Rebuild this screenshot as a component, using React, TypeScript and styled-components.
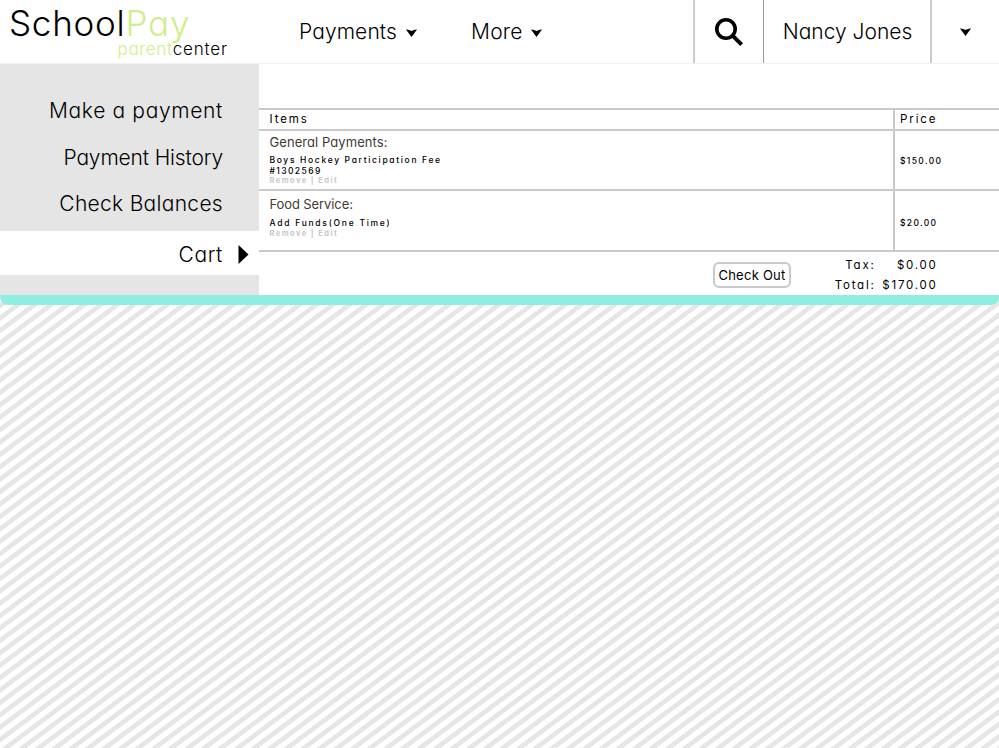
import React from "react";
import styled, { createGlobalStyle } from "styled-components";

const LINE = "#c9c9c9";
const GREY = "#e5e5e5";
const LIME = "#d0ee8c";

const GlobalStyle = createGlobalStyle`
  * { box-sizing: border-box; }
  body {
    margin: 0;
    background: #fff;
    color: #000;
    font-family: Inter, "Open Sans", sans-serif;
    font-weight: 300;
    font-feature-settings: "cv11" 1;
  }
`;

const Page = styled.div`
  display: flex;
  flex-direction: column;
  height: 748px;
  overflow: hidden;
  background: repeating-linear-gradient(
    143.2deg,
    #fff 0 3.9px,
    #e6e6e6 4.4px 8.6px,
    #fff 9.1px 9.93px
  );
`;

const Header = styled.header`
  display: flex;
  flex: none;
  height: 64px;
  background: #fff;
  border-bottom: 1px solid #f2f2f2;
`;

const Logo = styled.div`
  width: 289px;
  padding: 5px 0 0 9px;
`;

const Brand = styled.div`
  display: flex;
  font-size: 35px;
  line-height: 36px;
`;

const BrandPart = styled.span<{ $color?: string; $spacing: number }>`
  color: ${(p) => p.$color ?? "#000"};
  letter-spacing: ${(p) => p.$spacing}px;
`;

const SubBrand = styled(Brand)`
  justify-content: flex-end;
  width: 219px;
  margin-top: -1px;
  font-size: 17px;
  line-height: 18px;
`;

const MenuButton = styled.button<{ $width: number; $gap: number; $spacing: number }>`
  display: flex;
  align-items: center;
  gap: ${(p) => p.$gap}px;
  width: ${(p) => p.$width}px;
  padding: 0 0 0 10px;
  border: 0;
  background: none;
  color: inherit;
  font: inherit;
  font-size: 21px;
  letter-spacing: ${(p) => p.$spacing}px;

  svg {
    margin-top: 2px;
  }
`;

const HeaderCell = styled.div<{ $width?: number; $line: string }>`
  display: flex;
  align-items: center;
  justify-content: center;
  width: ${(p) => (p.$width ? `${p.$width}px` : "auto")};
  flex: ${(p) => (p.$width ? "none" : "1")};
  border-left: ${(p) => p.$line};
`;

const UserName = styled.span`
  padding-left: 1px;
  font-size: 21px;
  white-space: nowrap;
`;

const HeaderTools = styled.div`
  display: flex;
  width: 306px;
  margin-left: auto;
`;

const Body = styled.div`
  display: flex;
  flex: none;
  height: 231px;
  background: #fff;
`;

const Sidebar = styled.nav`
  display: flex;
  flex-direction: column;
  width: 259px;
  padding-top: 23.5px;
  background: ${GREY};
`;

const SideLink = styled.a<{ $active?: boolean; $spacing: number }>`
  display: flex;
  align-items: center;
  justify-content: flex-end;
  gap: 15px;
  height: ${(p) => (p.$active ? 44 : 46.5)}px;
  margin-top: ${(p) => (p.$active ? 4 : 0)}px;
  padding: ${(p) => (p.$active ? "2px 10px 0 0" : "0 36px 0 0")};
  background: ${(p) => (p.$active ? "#fff" : "transparent")};
  font-size: 21px;
  letter-spacing: ${(p) => p.$spacing}px;
`;

const CartPanel = styled.main`
  flex: 1;
  padding-top: 44px;
`;

const TableRow = styled.div<{ $height: number }>`
  display: grid;
  grid-template-columns: 634px 1fr;
  height: ${(p) => p.$height}px;
  border-top: 2px solid ${LINE};
`;

const HeadCell = styled.div`
  padding-left: 10.5px;
  font-size: 11.5px;
  font-weight: 400;
  line-height: 19px;
  letter-spacing: 1.9px;

  & + & {
    padding-left: 5px;
    border-left: 2px solid ${LINE};
  }
`;

const ItemCell = styled.div<{ $top: number }>`
  padding: ${(p) => p.$top}px 0 0 10.5px;
`;

const Category = styled.div<{ $spacing: number }>`
  color: #3f3b33;
  font-size: 13px;
  font-weight: 400;
  line-height: 16px;
  letter-spacing: ${(p) => p.$spacing}px;
`;

const Description = styled.div<{ $top: number; $spacing: number }>`
  margin-top: ${(p) => p.$top}px;
  font-size: 8.5px;
  font-weight: 500;
  line-height: 11px;
  letter-spacing: ${(p) => p.$spacing}px;
`;

const ItemNumber = styled.div`
  letter-spacing: 1.4px;
`;

const Actions = styled.div<{ $top?: number }>`
  margin-top: ${(p) => p.$top ?? 0}px;
  color: #c8c8c8;
  font-size: 7.5px;
  font-weight: 700;
  line-height: 8px;
  letter-spacing: 1.45px;
`;

const PriceCell = styled.div<{ $top: number }>`
  display: flex;
  align-items: center;
  padding: ${(p) => p.$top}px 0 0 5px;
  border-left: 2px solid ${LINE};
  font-size: 8.5px;
  font-weight: 500;
  letter-spacing: 1.35px;
`;

const Footer = styled.div`
  display: flex;
  height: 45px;
  padding-left: 454px;
  border-top: 2px solid ${LINE};
`;

const CheckOut = styled.button`
  width: 78px;
  height: 26px;
  margin: 10px 0 0;
  padding: 0;
  border: 2px solid ${LINE};
  border-radius: 6px;
  background: #fff;
  color: #000;
  font: inherit;
  font-size: 13px;
  font-weight: 400;
  line-height: 20px;
  letter-spacing: 0.25px;
  white-space: nowrap;
`;

const Totals = styled.dl`
  display: grid;
  grid-template-columns: 84.5px 62px;
  grid-auto-rows: 20px;
  margin: 3px 0 0;
  text-align: right;
  font-size: 11.5px;
  font-weight: 400;
  line-height: 20px;
  letter-spacing: 1.75px;
`;

const Term = styled.dt``;
const Amount = styled.dd`
  margin: 0;
`;

const Accent = styled.div`
  flex: none;
  height: 10px;
  border-radius: 0 0 8px 8px;
  background: #8deee1;
`;

const Caret = () => (
  <svg width="11" height="8" viewBox="0 0 11 8">
    <path d="M0 0.5Q3 0.3 5.5 2Q8 0.3 11 0.5L5.5 8Z" />
  </svg>
);

const SearchIcon = () => (
  <svg width="30" height="30" viewBox="0 0 30 30">
    <circle cx="12" cy="12" r="9.2" fill="none" stroke="#000" strokeWidth="3.6" />
    <path d="M18.6 18.6L27.6 27.6" stroke="#000" strokeWidth="4" />
  </svg>
);

const CartPointer = () => (
  <svg width="11" height="19" viewBox="0 0 11 19">
    <path d="M0.5 0L10.5 9.5L0.5 19Z" />
  </svg>
);

const sideLinks = [
  { label: "Make a payment", spacing: 0.65 },
  { label: "Payment History", spacing: -0.15 },
  { label: "Check Balances", spacing: 0.3 },
];

export default function App() {
  return (
    <>
      <GlobalStyle />
      <Page>
        <Header>
          <Logo>
            <Brand>
              <BrandPart $spacing={0.75}>School</BrandPart>
              <BrandPart $color={LIME} $spacing={0.8}>Pay</BrandPart>
            </Brand>
            <SubBrand>
              <BrandPart $color={LIME} $spacing={0.65}>parent</BrandPart>
              <BrandPart $spacing={0.85}>center</BrandPart>
            </SubBrand>
          </Logo>
          <MenuButton $width={172} $gap={9} $spacing={0.1}>Payments<Caret /></MenuButton>
          <MenuButton $width={110} $gap={8} $spacing={0.25}>More<Caret /></MenuButton>
          <HeaderTools>
            <HeaderCell $width={70} $line="2px solid #ccc"><SearchIcon /></HeaderCell>
            <HeaderCell $width={167} $line="1px solid #999"><UserName>Nancy Jones</UserName></HeaderCell>
            <HeaderCell $line="2px solid #ccc"><Caret /></HeaderCell>
          </HeaderTools>
        </Header>
        <Body>
          <Sidebar>
            {sideLinks.map((l) => (
              <SideLink key={l.label} $spacing={l.spacing}>{l.label}</SideLink>
            ))}
            <SideLink $active $spacing={0.6}>Cart<CartPointer /></SideLink>
          </Sidebar>
          <CartPanel>
            <TableRow $height={21}>
              <HeadCell>Items</HeadCell>
              <HeadCell>Price</HeadCell>
            </TableRow>
            <TableRow $height={60}>
              <ItemCell $top={3}>
                <Category $spacing={0.07}>General Payments:</Category>
                <Description $top={4.5} $spacing={1.66}>
                  Boys Hockey Participation Fee
                  <ItemNumber>#1302569</ItemNumber>
                </Description>
                <Actions>Remove | Edit</Actions>
              </ItemCell>
              <PriceCell $top={2.5}>$150.00</PriceCell>
            </TableRow>
            <TableRow $height={61}>
              <ItemCell $top={5}>
                <Category $spacing={-0.1}>Food Service:</Category>
                <Description $top={6} $spacing={1.74}>Add Funds(One Time)</Description>
                <Actions $top={1}>Remove | Edit</Actions>
              </ItemCell>
              <PriceCell $top={5.5}>$20.00</PriceCell>
            </TableRow>
            <Footer>
              <CheckOut>Check Out</CheckOut>
              <Totals>
                <Term>Tax:</Term>
                <Amount>$0.00</Amount>
                <Term>Total:</Term>
                <Amount>$170.00</Amount>
              </Totals>
            </Footer>
          </CartPanel>
        </Body>
        <Accent />
      </Page>
    </>
  );
}
